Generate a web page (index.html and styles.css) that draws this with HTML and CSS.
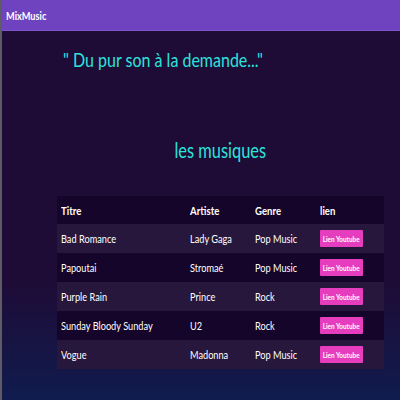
FILE: index.html
```html
<!DOCTYPE html>
<html lang="fr">
<head>
<meta charset="utf-8">
<title>MixMusic</title>
<link rel="stylesheet" href="styles.css">
</head>
<body>
<header class="navbar"><span class="sx brand">MixMusic</span></header>
<main class="content">
  <h1 class="slogan"><span class="sx">" Du pur son à la demande..."</span></h1>
  <h2 class="section-title"><span class="sx sx-center">les musiques</span></h2>
  <table class="music-table">
    <thead>
      <tr><th class="c-title"><span class="sx">Titre</span></th><th class="c-artist"><span class="sx">Artiste</span></th><th class="c-genre"><span class="sx">Genre</span></th><th class="c-link"><span class="sx">lien</span></th></tr>
    </thead>
    <tbody>
      <tr><td><span class="sx">Bad Romance</span></td><td><span class="sx">Lady Gaga</span></td><td><span class="sx">Pop Music</span></td><td><a class="btn-yt"><span class="sx sx-center">Lien Youtube</span></a></td></tr>
      <tr><td><span class="sx">Papoutai</span></td><td><span class="sx">Stromaé</span></td><td><span class="sx">Pop Music</span></td><td><a class="btn-yt"><span class="sx sx-center">Lien Youtube</span></a></td></tr>
      <tr><td><span class="sx">Purple Rain</span></td><td><span class="sx">Prince</span></td><td><span class="sx">Rock</span></td><td><a class="btn-yt"><span class="sx sx-center">Lien Youtube</span></a></td></tr>
      <tr><td><span class="sx">Sunday Bloody Sunday</span></td><td><span class="sx">U2</span></td><td><span class="sx">Rock</span></td><td><a class="btn-yt"><span class="sx sx-center">Lien Youtube</span></a></td></tr>
      <tr><td><span class="sx">Vogue</span></td><td><span class="sx">Madonna</span></td><td><span class="sx">Pop Music</span></td><td><a class="btn-yt"><span class="sx sx-center">Lien Youtube</span></a></td></tr>
    </tbody>
  </table>
</main>
</body>
</html>
```
FILE: styles.css
```css
html, body {
  margin: 0;
  padding: 0;
  height: 100%;
  overflow: hidden;
}
body {
  font-family: Lato, "Noto Sans", sans-serif;
  background: linear-gradient(to bottom, #1e0b36 0%, #1e0b36 70%, #101c4e 100%);
  border-left: 2px solid #5e5a66;
  box-sizing: border-box;
  color: #fff;
}
/* the captured page is horizontally compressed: narrow the glyphs */
.sx {
  display: inline-block;
  white-space: nowrap;
  transform: scaleX(0.8);
  transform-origin: 0 50%;
}
.sx-center {
  transform-origin: 50% 50%;
}
.navbar {
  height: 31px;
  background: #6f43c0;
  border-bottom: 1px solid #7d55c9;
  box-sizing: border-box;
  display: flex;
  align-items: center;
  padding-left: 4px;
}
.brand {
  font-size: 11.5px;
  font-weight: 700;
  color: #fff;
}
.content {
  width: 327px;
  margin-left: 55px;
  padding-top: 12px;
}
.slogan {
  margin: 0 0 0 6px;
  font-size: 20px;
  font-weight: 400;
  color: #2ce3dc;
  line-height: 32px;
}
.section-title {
  margin: 59px 0 0 0;
  text-align: center;
  font-size: 20.5px;
  font-weight: 400;
  color: #2ce3dc;
  line-height: 32px;
}
.music-table {
  margin-top: 30px;
  width: 327px;
  border-collapse: collapse;
  table-layout: fixed;
  font-size: 11.5px;
}
.music-table th,
.music-table td {
  text-align: left;
  padding: 0 4px;
  height: 29px;
  vertical-align: middle;
  overflow: visible;
}
.music-table th {
  font-weight: 700;
  font-size: 12px;
  height: 28px;
}
.music-table thead tr { background: #16052a; }
.music-table tbody tr:nth-child(odd) { background: #27173c; }
.music-table tbody tr:nth-child(even) { background: #16052a; }
.c-title { width: 121px; }
.c-artist { width: 57px; }
.c-genre { width: 57px; }
.c-link { width: 60px; }
.btn-yt {
  display: flex;
  justify-content: center;
  align-items: center;
  width: 43px;
  height: 17px;
  background: #e63dbf;
  color: #fff;
  font-size: 8px;
  font-weight: 700;
  border-radius: 1px;
  overflow: visible;
}
```
